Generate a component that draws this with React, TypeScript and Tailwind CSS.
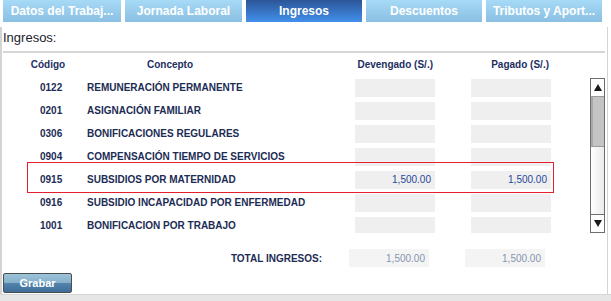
const tabs = [
  { label: "Datos del Trabaj...", w: "w-[118px]" },
  { label: "Jornada Laboral", w: "w-[117px]" },
  { label: "Ingresos", w: "w-[116px]", active: true },
  { label: "Descuentos", w: "w-[116px]" },
  { label: "Tributos y Aport...", w: "w-[116px]" },
];

const rows = [
  { code: "0122", name: "REMUNERACIÓN PERMANENTE", dev: "", pag: "" },
  { code: "0201", name: "ASIGNACIÓN FAMILIAR", dev: "", pag: "" },
  { code: "0306", name: "BONIFICACIONES REGULARES", dev: "", pag: "" },
  { code: "0904", name: "COMPENSACIÓN TIEMPO DE SERVICIOS", dev: "", pag: "" },
  { code: "0915", name: "SUBSIDIOS POR MATERNIDAD", dev: "1,500.00", pag: "1,500.00" },
  { code: "0916", name: "SUBSIDIO INCAPACIDAD POR ENFERMEDAD", dev: "", pag: "" },
  { code: "1001", name: "BONIFICACION POR TRABAJO", dev: "", pag: "" },
];

const Arrow = ({ down }: { down?: boolean }) => (
  <svg width="8" height="7" viewBox="0 0 8 7">
    <path d={down ? "M0 0 L8 0 L4 7 Z" : "M4 0 L8 7 L0 7 Z"} fill="#1a1a1a" />
  </svg>
);

const App = () => {
  return (
    <div className="relative w-[611px] h-[301px] bg-white overflow-hidden flex flex-col font-['Liberation_Sans',Arial,sans-serif]">
      {/* tabs */}
      <div className="flex gap-[4px] pl-[3px] h-[22px]">
        {tabs.map((t) => (
          <div
            key={t.label}
            className={`${t.w} h-[22px] flex items-center justify-center text-[12px] font-bold text-white whitespace-nowrap ${
              t.active
                ? "bg-gradient-to-b from-[#2b5698] to-[#4290ec]"
                : "bg-gradient-to-b from-[#a7daf6] to-[#8bbfe3]"
            }`}
          >
            {t.label}
          </div>
        ))}
      </div>

      {/* body */}
      <div className="mt-[5px] h-[267px] w-[608px] border-l-2 border-r border-[#d4d4d4] flex flex-col">
        <div className="pl-[1px] pt-[3px] text-[13px] leading-[15px] text-[#1b1d2b]">Ingresos:</div>
        <div className="mt-[6px] ml-[1px] mr-[2px] h-[2px] bg-[#d6d6d6]" />

        {/* header */}
        <div className="flex items-center h-[23px] text-[10px] font-bold text-[#1d2f5f] whitespace-nowrap">
          <div className="ml-[25px] w-[42px] text-center">Código</div>
          <div className="w-[202px] text-center">Concepto</div>
          <div className="ml-[84px] w-[80px] text-right pr-[2px]">Devengado (S/.)</div>
          <div className="ml-[36px] w-[80px] text-right pr-[2px]">Pagado (S/.)</div>
        </div>

        {/* scroll area */}
        <div className="flex h-[157px]">
          <div className="w-[588px] h-[157px] overflow-hidden">
            {rows.map((r) => (
              <div key={r.code} className="flex items-center h-[23px] text-[10px] whitespace-nowrap">
                <div className="ml-[38px] w-[47px] font-bold text-[#1c2c54]">{r.code}</div>
                <div className="w-[268px] font-bold text-[#1c2c54]">{r.name}</div>
                <div className="w-[80px] h-[18px] bg-[#efefef] flex items-center justify-end pr-[4px] text-[#27479a]">
                  {r.dev}
                </div>
                <div className="ml-[36px] w-[80px] h-[18px] bg-[#efefef] flex items-center justify-end pr-[4px] text-[#27479a]">
                  {r.pag}
                </div>
              </div>
            ))}
          </div>
          {/* scrollbar */}
          <div className="mt-[2px] w-[15px] h-[155px] border border-[#6e6e6e] flex flex-col bg-white">
            <div className="h-[17px] flex items-center justify-center bg-white">
              <Arrow />
            </div>
            <div className="h-[51px] bg-[#c4c4c4] border-y border-[#9a9a9a] border-l-2 border-l-[#a8a8a8]" />
            <div className="flex-1 bg-gradient-to-r from-white to-[#ebebeb]" />
            <div className="h-[18px] border-t border-[#6e6e6e] flex items-center justify-center bg-white">
              <Arrow down />
            </div>
          </div>
        </div>

        {/* total */}
        <div className="mt-[16px] flex items-center h-[18px] text-[10px] whitespace-nowrap">
          <div className="w-[320px] text-right font-bold text-[#1c2c54]">TOTAL INGRESOS:</div>
          <div className="ml-[27px] w-[80px] h-[18px] bg-[#f4f4f4] flex items-center justify-end pr-[4px] text-[#8595b0]">
            1,500.00
          </div>
          <div className="ml-[36px] w-[80px] h-[18px] bg-[#f4f4f4] flex items-center justify-end pr-[4px] text-[#8595b0]">
            1,500.00
          </div>
        </div>

        <button className="mt-[6px] ml-[1px] w-[69px] h-[20px] rounded-[2px] border border-[#4d4d4d] bg-[linear-gradient(to_bottom,#9cc4da_0%,#86b0ca_50%,#5284ae_50%,#3f6e98_100%)] text-white text-[11px] font-bold flex items-center justify-center">
          Grabar
        </button>
      </div>

      {/* bottom bar */}
      <div className="flex-1 bg-[#e6e6e6] border-t border-[#d6d6d6]" />

      {/* highlight around the selected row */}
      <div className="absolute left-[27px] top-[162px] w-[527px] h-[31px] border border-[#e3202b] pointer-events-none" />
    </div>
  );
};

export default App;
